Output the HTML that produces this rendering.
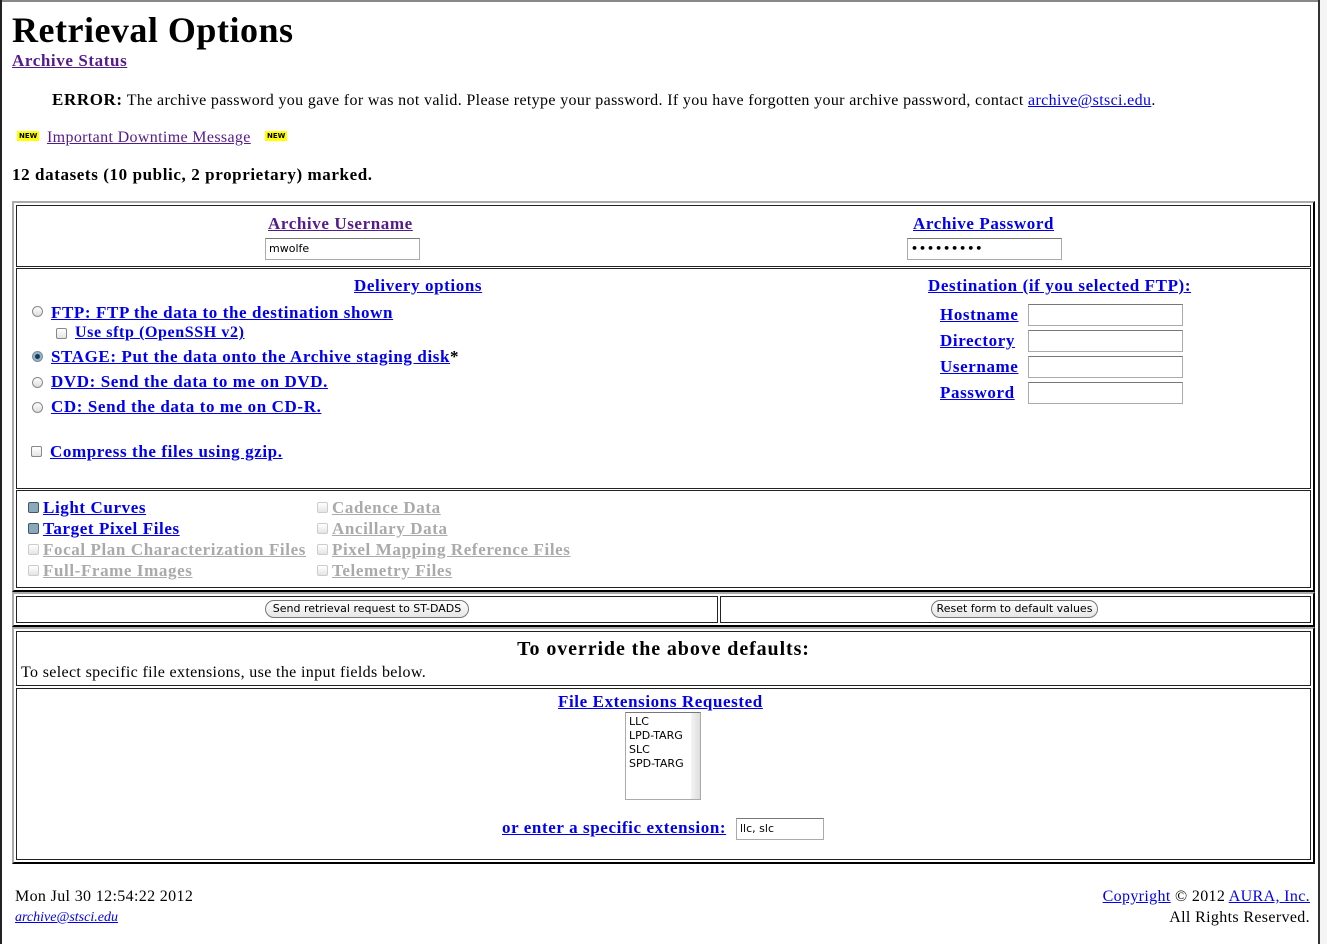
<!DOCTYPE html>
<html><head><meta charset="utf-8"><style>
body{margin:0;width:1327px;height:944px;position:relative;overflow:hidden;background:#fff;font-family:"Liberation Serif",serif;font-size:16px;color:#000}
.t{position:absolute;white-space:nowrap;line-height:18px;letter-spacing:0.35px}
a{color:#0000ee;text-decoration:underline}
.v{color:#551a8b}
b,.b{font-weight:bold}
.t.b{letter-spacing:0.6px;font-size:17px}
b{letter-spacing:0.6px;font-size:17px}
.box{position:absolute;border:1px solid #222;box-sizing:border-box}
.outer{position:absolute;box-sizing:border-box;border:2px solid;border-color:#aaa #000 #000 #aaa}
.inp{position:absolute;box-sizing:border-box;border:1px solid #aaa;border-top-color:#777;background:#fff;font:11px "DejaVu Sans",sans-serif;padding:3px 3px;line-height:13px}
.rad{position:absolute;width:11px;height:11px;border-radius:50%;border:1px solid #888;box-sizing:border-box;background:linear-gradient(#fff,#ddd)}
.chk{position:absolute;width:11px;height:11px;border-radius:2px;border:1px solid #888;box-sizing:border-box;background:linear-gradient(#fff,#e4e4e4)}
.dis{border-color:#ccc}
.g{color:#aaa}
.btn{position:absolute;box-sizing:border-box;border:1px solid #777;border-radius:9px;background:linear-gradient(#fff,#e6e6e6);font:11px "DejaVu Sans",sans-serif;text-align:center;line-height:16px}
.new{position:absolute;background:#ff0;font:bold 7px "DejaVu Sans",sans-serif;padding:1px 2px;line-height:8px}
</style></head><body>
<div style="position:absolute;left:0;top:0;width:1327px;height:2px;background:#888"></div>
<div style="position:absolute;left:0;top:0;width:2px;height:944px;background:#222"></div>
<div style="position:absolute;left:1318px;top:0;width:2px;height:944px;background:#333"></div>
<div style="position:absolute;left:1320px;top:0;width:7px;height:944px;background:#f4f4f4"></div>

<div class="t b" style="left:12px;top:10px;font-size:36px;line-height:40px;letter-spacing:0.5px">Retrieval Options</div>
<div class="t b" style="left:12px;top:52px"><a class="v" href="#">Archive Status</a></div>
<div class="t" style="left:52px;top:91px"><b>ERROR:</b> The archive password you gave for was not valid. Please retype your password. If you have forgotten your archive password, contact <a href="#">archive@stsci.edu</a>.</div>
<div class="new" style="left:17px;top:131px">NEW</div>
<div class="t" style="left:47px;top:129px"><a class="v" href="#">Important Downtime Message</a></div>
<div class="new" style="left:265px;top:131px">NEW</div>
<div class="t b" style="left:12px;top:166px">12 datasets (10 public, 2 proprietary) marked.</div>

<div class="outer" style="left:12px;top:201px;width:1303px;height:391px"></div>
<div class="box" style="left:16px;top:205px;width:1295px;height:62px"></div>
<div class="box" style="left:16px;top:268px;width:1295px;height:221px"></div>
<div class="box" style="left:16px;top:490px;width:1295px;height:98px"></div>

<div class="t b" style="left:268px;top:215px"><a class="v" href="#">Archive Username</a></div>
<div class="inp" style="left:265px;top:238px;width:155px;height:22px">mwolfe</div>
<div class="t b" style="left:913px;top:215px"><a href="#">Archive Password</a></div>
<div class="inp" style="left:907px;top:238px;width:155px;height:22px;font-weight:bold;letter-spacing:1px">•••••••••</div>

<div class="t b" style="left:354px;top:277px"><a href="#">Delivery options</a></div>
<div class="rad" style="left:32px;top:306px"></div>
<div class="t b" style="left:51px;top:304px"><a href="#">FTP: FTP the data to the destination shown</a></div>
<div class="chk" style="left:56px;top:328px"></div>
<div class="t b" style="left:75px;top:324px;font-size:16px"><a href="#">Use sftp (OpenSSH v2)</a></div>
<div class="rad" style="left:32px;top:351px;background:radial-gradient(circle,#234 0 2px,#8bd 3px)"></div>
<div class="t b" style="left:51px;top:348px"><a href="#">STAGE: Put the data onto the Archive staging disk</a>*</div>
<div class="rad" style="left:32px;top:377px"></div>
<div class="t b" style="left:51px;top:373px"><a href="#">DVD: Send the data to me on DVD.</a></div>
<div class="rad" style="left:32px;top:402px"></div>
<div class="t b" style="left:51px;top:398px"><a href="#">CD: Send the data to me on CD-R.</a></div>
<div class="chk" style="left:31px;top:446px"></div>
<div class="t b" style="left:50px;top:443px"><a href="#">Compress the files using gzip.</a></div>

<div class="t b" style="left:928px;top:277px"><a href="#">Destination (if you selected FTP):</a></div>
<div class="t b" style="left:940px;top:306px"><a href="#">Hostname</a></div>
<div class="t b" style="left:940px;top:332px"><a href="#">Directory</a></div>
<div class="t b" style="left:940px;top:358px"><a href="#">Username</a></div>
<div class="t b" style="left:940px;top:384px"><a href="#">Password</a></div>
<div class="inp" style="left:1028px;top:304px;width:155px;height:22px"></div>
<div class="inp" style="left:1028px;top:330px;width:155px;height:22px"></div>
<div class="inp" style="left:1028px;top:356px;width:155px;height:22px"></div>
<div class="inp" style="left:1028px;top:382px;width:155px;height:22px"></div>

<div class="chk" style="left:28px;top:502px;background:#8ab;border-color:#456"></div>
<div class="t b" style="left:43px;top:499px"><a href="#">Light Curves</a></div>
<div class="chk" style="left:28px;top:523px;background:#8ab;border-color:#456"></div>
<div class="t b" style="left:43px;top:520px"><a href="#">Target Pixel Files</a></div>
<div class="chk dis" style="left:28px;top:544px"></div>
<div class="t b g" style="left:43px;top:541px;text-decoration:underline">Focal Plan Characterization Files</div>
<div class="chk dis" style="left:28px;top:565px"></div>
<div class="t b g" style="left:43px;top:562px;text-decoration:underline">Full-Frame Images</div>
<div class="chk dis" style="left:317px;top:502px"></div>
<div class="t b g" style="left:332px;top:499px;text-decoration:underline">Cadence Data</div>
<div class="chk dis" style="left:317px;top:523px"></div>
<div class="t b g" style="left:332px;top:520px;text-decoration:underline">Ancillary Data</div>
<div class="chk dis" style="left:317px;top:544px"></div>
<div class="t b g" style="left:332px;top:541px;text-decoration:underline">Pixel Mapping Reference Files</div>
<div class="chk dis" style="left:317px;top:565px"></div>
<div class="t b g" style="left:332px;top:562px;text-decoration:underline">Telemetry Files</div>

<div class="outer" style="left:12px;top:592px;width:1303px;height:35px"></div>
<div class="box" style="left:16px;top:596px;width:702px;height:27px"></div>
<div class="box" style="left:720px;top:596px;width:591px;height:27px"></div>
<div class="btn" style="left:265px;top:600px;width:204px;height:18px">Send retrieval request to ST-DADS</div>
<div class="btn" style="left:931px;top:600px;width:167px;height:18px">Reset form to default values</div>

<div class="outer" style="left:12px;top:627px;width:1303px;height:237px"></div>
<div class="box" style="left:16px;top:631px;width:1295px;height:55px"></div>
<div class="box" style="left:16px;top:688px;width:1295px;height:172px"></div>
<div class="t b" style="left:0;width:1327px;text-align:center;top:638px;font-size:20px;line-height:22px;letter-spacing:0.9px">To override the above defaults:</div>
<div class="t" style="left:21px;top:664px">To select specific file extensions, use the input fields below.</div>
<div class="t b" style="left:558px;top:693px"><a href="#">File Extensions Requested</a></div>
<div class="inp" style="left:625px;top:712px;width:76px;height:88px;padding:2px 3px;line-height:14px">LLC<br>LPD-TARG<br>SLC<br>SPD-TARG
<div style="position:absolute;right:0;top:0;width:9px;height:86px;background:linear-gradient(90deg,#f4f4f4,#ddd)"></div></div>
<div class="t b" style="left:502px;top:819px"><a href="#">or enter a specific extension:</a></div>
<div class="inp" style="left:736px;top:818px;width:88px;height:22px">llc, slc</div>

<div class="t" style="left:15px;top:888px">Mon Jul 30 12:54:22 2012</div>
<div class="t" style="left:15px;top:909px;font-size:14px;font-style:italic;letter-spacing:0"><a href="#">archive@stsci.edu</a></div>
<div class="t" style="right:17px;top:888px;text-align:right"><a href="#">Copyright</a> © 2012 <a href="#">AURA, Inc.</a></div>
<div class="t" style="right:17px;top:909px">All Rights Reserved.</div>
</body></html>
